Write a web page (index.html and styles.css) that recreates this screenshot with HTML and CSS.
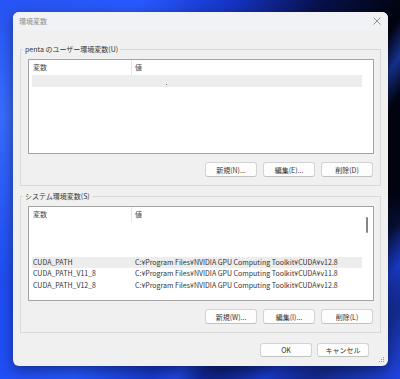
FILE: index.html
```html
<!DOCTYPE html>
<html lang="ja">
<head>
    <meta charset="utf-8">
    <title>環境変数</title>
    <link rel="stylesheet" href="styles.css">
</head>
<body>
    <div class="dialog">
        <div class="titlebar">
            <span class="title">環境変数</span>
            <svg class="close" width="8" height="8" viewBox="0 0 8 8">
                <path d="M0.5 0.5L7.5 7.5M7.5 0.5L0.5 7.5" stroke="#7a7a7a" stroke-width="0.8" fill="none"/>
            </svg>
        </div>
        <div class="content">
            <fieldset class="group">
                <legend>penta のユーザー環境変数(U)</legend>
                <div class="group-body">
                    <div class="list">
                        <div class="list-main">
                            <div class="list-head">
                                <span class="col-name">変数</span>
                                <span class="col-value">値</span>
                            </div>
                            <div class="row selected">
                                <span class="col-name"></span>
                                <span class="col-value"><span class="dot"></span></span>
                            </div>
                        </div>
                        <div class="scroll"></div>
                    </div>
                    <div class="buttons">
                        <button>新規(N)...</button>
                        <button>編集(E)...</button>
                        <button>削除(D)</button>
                    </div>
                </div>
            </fieldset>

            <fieldset class="group second">
                <legend>システム環境変数(S)</legend>
                <div class="group-body">
                    <div class="list">
                        <div class="list-main">
                            <div class="list-head">
                                <span class="col-name">変数</span>
                                <span class="col-value">値</span>
                            </div>
                            <div class="row"><span class="col-name"></span><span class="col-value"></span></div>
                            <div class="row"><span class="col-name"></span><span class="col-value"></span></div>
                            <div class="row"><span class="col-name"></span><span class="col-value"></span></div>
                            <div class="row selected">
                                <span class="col-name">CUDA_PATH</span>
                                <span class="col-value">C:¥Program Files¥NVIDIA GPU Computing Toolkit¥CUDA¥v12.8</span>
                            </div>
                            <div class="row">
                                <span class="col-name">CUDA_PATH_V11_8</span>
                                <span class="col-value">C:¥Program Files¥NVIDIA GPU Computing Toolkit¥CUDA¥v11.8</span>
                            </div>
                            <div class="row">
                                <span class="col-name">CUDA_PATH_V12_8</span>
                                <span class="col-value">C:¥Program Files¥NVIDIA GPU Computing Toolkit¥CUDA¥v12.8</span>
                            </div>
                        </div>
                        <div class="scroll"><div class="thumb"></div></div>
                    </div>
                    <div class="buttons">
                        <button>新規(W)...</button>
                        <button>編集(I)...</button>
                        <button>削除(L)</button>
                    </div>
                </div>
            </fieldset>

            <div class="buttons footer">
                <button>OK</button>
                <button>キャンセル</button>
            </div>
        </div>
        <svg class="grip" width="6" height="6" viewBox="0 0 6 6">
            <rect x="4" y="0" width="1" height="1" fill="#9a9a9a"/>
            <rect x="2" y="2" width="1" height="1" fill="#9a9a9a"/>
            <rect x="4" y="2" width="1" height="1" fill="#9a9a9a"/>
            <rect x="0" y="4" width="1" height="1" fill="#9a9a9a"/>
            <rect x="2" y="4" width="1" height="1" fill="#9a9a9a"/>
            <rect x="4" y="4" width="1" height="1" fill="#9a9a9a"/>
        </svg>
    </div>
</body>
</html>
```

FILE: styles.css
```css
* {
    margin: 0;
    padding: 0;
    box-sizing: border-box;
    font-family: 'Noto Sans CJK JP', 'Noto Sans', sans-serif;
}

body {
    width: 400px;
    height: 379px;
    overflow: hidden;
    padding: 12px 0 0 13px;
    background:
        linear-gradient(125deg, transparent 62%, rgba(40, 90, 255, 0.55) 66%, transparent 70%),
        linear-gradient(140deg, transparent 78%, rgba(30, 70, 240, 0.7) 84%, transparent 90%),
        radial-gradient(ellipse at 100% 100%, #1f44e0 0%, transparent 35%),
        radial-gradient(ellipse at 0% 30%, #3a6cff 0%, transparent 45%),
        linear-gradient(100deg, #1d47ee 0%, #2556ff 30%, #1634c4 50%, #08124e 68%, #020513 85%, #01030c 100%);
}

.dialog {
    position: relative;
    width: 375px;
    background: #f0f0f0;
    border-radius: 6px;
    box-shadow: 0 4px 14px rgba(0, 0, 0, 0.45);
    padding-bottom: 9px;
}

.titlebar {
    height: 18px;
    display: flex;
    align-items: center;
    justify-content: space-between;
    padding: 0 7px 0 6px;
    background: #f1f2f5;
    border-radius: 6px 6px 0 0;
}

.title {
    font-size: 7px;
    color: #8a8a8a;
}

.content {
    padding: 14px 7px 0 7px;
}

.group {
    border: 1px solid #d9d9d9;
    min-width: 0;
}

.group.second {
    margin-top: 5px;
}

legend {
    font-size: 7px;
    line-height: 10px;
    color: #333;
    margin-left: 2px;
    padding: 0 2px;
}

.group-body {
    padding: 5px 6px 8px 7px;
}

.list {
    height: 95px;
    border: 1px solid #a3a3a3;
    background: #fff;
    display: flex;
    overflow: hidden;
}

.list-main {
    width: 333px;
}

.list-head {
    display: grid;
    grid-template-columns: 103px 1fr;
    height: 15px;
    font-size: 7px;
    line-height: 15px;
    color: #444;
}

.list-head .col-name {
    padding-left: 4px;
    border-right: 1px solid #e5e5e5;
}

.list-head .col-value {
    padding-left: 3px;
}

.row {
    display: grid;
    grid-template-columns: 100px 1fr;
    margin-left: 3px;
    height: 11.5px;
    font-size: 7px;
    line-height: 11.5px;
    color: #333;
    white-space: nowrap;
}

.row.selected {
    background: #ededed;
}

.row .col-name {
    padding-left: 1px;
}

.row .col-value {
    padding-left: 3px;
}

.dot {
    display: inline-block;
    width: 1px;
    height: 1px;
    margin-left: 31px;
    background: #777;
    vertical-align: -2px;
}

.scroll {
    flex: 1;
    padding: 10px 0 0 4px;
}

.thumb {
    width: 2px;
    height: 16px;
    border-radius: 1px;
    background: #868686;
}

.buttons {
    display: flex;
    justify-content: flex-end;
    gap: 6px;
    margin-top: 8px;
    padding-right: 1px;
}

button {
    width: 52px;
    height: 15px;
    background: #fdfdfd;
    border: 1px solid #d3d3d3;
    border-bottom-color: #c2c2c2;
    border-radius: 3px;
    font-size: 7px;
    color: #333;
}

.footer {
    margin-top: 10px;
    gap: 5px;
    padding-right: 12px;
}

.footer button {
    height: 14px;
}

.grip {
    position: absolute;
    right: 3px;
    bottom: 3px;
}
```
